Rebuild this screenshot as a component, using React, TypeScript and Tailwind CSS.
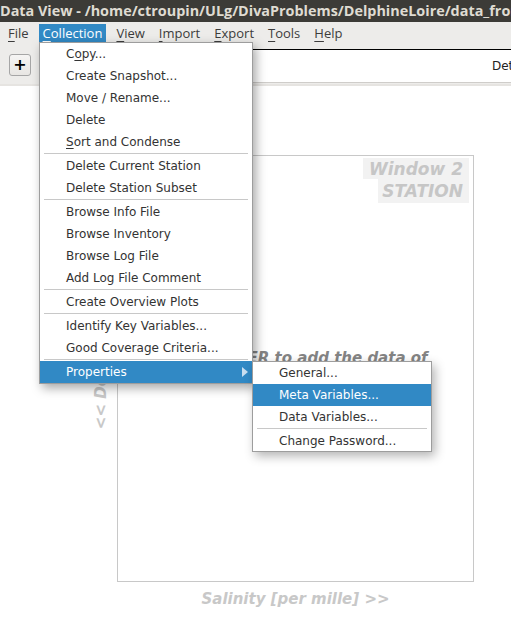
import React from 'react'

const collectionItems: (string | null)[] = [
  'Copy...',
  'Create Snapshot...',
  'Move / Rename...',
  'Delete',
  'Sort and Condense',
  null,
  'Delete Current Station',
  'Delete Station Subset',
  null,
  'Browse Info File',
  'Browse Inventory',
  'Browse Log File',
  'Add Log File Comment',
  null,
  'Create Overview Plots',
  null,
  'Identify Key Variables...',
  'Good Coverage Criteria...',
  null,
]

function Label({ text }: { text: string }) {
  // mnemonic underlines seen in the screenshot
  if (text === 'Copy...')
    return (
      <span>
        C<span className="underline underline-offset-2">o</span>py...
      </span>
    )
  if (text === 'Sort and Condense')
    return (
      <span>
        <span className="underline underline-offset-2">S</span>ort and Condense
      </span>
    )
  return <span>{text}</span>
}

function MenuBarItem({ first, rest, active }: { first: string; rest: string; active?: boolean }) {
  return (
    <div
      className={
        'h-[19px] px-[4px] flex items-center ' +
        (active ? 'bg-[#3189c5] text-white' : 'text-[#3c3c3c]')
      }
    >
      <span className="underline underline-offset-[3px] decoration-1">{first}</span>
      {rest}
    </div>
  )
}

export default function App() {
  return (
    <div className="relative w-[511px] h-[629px] overflow-hidden bg-white">
      {/* title bar */}
      <div className="h-[22px] bg-[#3c3b37] text-[#dfdbd2] font-['Open_Sans',sans-serif] font-bold text-[14.4px] leading-[22px] whitespace-nowrap overflow-hidden">
        Data View - /home/ctroupin/ULg/DivaProblems/DelphineLoire/data_from_somewhere
      </div>

      {/* menu bar */}
      <div className="h-[21px] bg-[#edecea] flex items-end gap-[6px] pl-[4px] font-['Open_Sans',sans-serif] text-[13px]">
        <MenuBarItem first="F" rest="ile" />
        <MenuBarItem first="C" rest="ollection" active />
        <MenuBarItem first="V" rest="iew" />
        <MenuBarItem first="I" rest="mport" />
        <MenuBarItem first="E" rest="xport" />
        <MenuBarItem first="T" rest="ools" />
        <MenuBarItem first="H" rest="elp" />
      </div>

      {/* toolbar */}
      <div className="h-[41px] bg-[#edecea] flex items-start">
        <button className="ml-[9px] mt-[11px] w-[22px] h-[22px] rounded-[3px] border border-[#a6a6a6] bg-gradient-to-b from-[#f6f5f4] to-[#e8e6e3] flex items-center justify-center text-[16px] font-bold leading-none text-black font-['DejaVu_Sans',sans-serif]">
          +
        </button>
        <div className="ml-[8px] mt-[6px] h-[34px] flex-1 bg-white border-t border-black border-b border-b-[#cfcdca] flex items-center overflow-hidden whitespace-nowrap font-['DejaVu_Sans',sans-serif] text-[12px] text-[#222]">
          <span className="pl-[453px]">Details</span>
        </div>
      </div>
      <div className="h-[2px] bg-[#e6e4e1]" />

      {/* main canvas */}
      <div className="relative pt-[69px]">
        <div className="relative ml-[117px] w-[357px] h-[427px] border border-[#c8c8c8]">
          <div className="absolute top-[2px] right-[4px] flex flex-col items-end font-['DejaVu_Sans',sans-serif] font-bold italic text-[17px] text-[#c6c6c6]">
            <div className="h-[21px] overflow-hidden bg-[#f2f2f2] pl-[6px] pr-[6px] pt-[1px] leading-[21px]">Window 2</div>
            <div className="h-[24px] bg-[#f2f2f2] pl-[4px] pr-[6px] leading-[24px]">STATION</div>
          </div>
          <div className="absolute top-[191px] left-0 right-0 text-center font-['DejaVu_Sans',sans-serif] font-bold italic text-[15px] text-[#848484] whitespace-nowrap">
            Press ENTER to add the data of
          </div>
        </div>
        <div className="w-[357px] ml-[117px] mt-[6px] text-center font-['DejaVu_Sans',sans-serif] font-bold italic text-[15px] text-[#c8c8c8]">
          Salinity [per mille] &gt;&gt;
        </div>
        <div className="absolute left-[90px] top-[72px] h-[427px] flex items-center">
          <div className="[writing-mode:vertical-rl] rotate-180 font-['DejaVu_Sans',sans-serif] font-bold italic text-[15px] text-[#c8c8c8] whitespace-nowrap">
            &lt;&lt; Depth [m]
          </div>
        </div>
      </div>

      {/* Collection dropdown */}
      <div className="absolute left-[39px] top-[42px] w-[214px] bg-white border border-[#9d9d9d] shadow-[3px_4px_10px_rgba(0,0,0,0.35)] font-['DejaVu_Sans',sans-serif] text-[12px] text-[#333]">
        {collectionItems.map((it, i) =>
          it === null ? (
            <div key={i} className="h-[2px] mx-[4px] border-t border-[#c8c8c8]" />
          ) : (
            <div key={i} className="h-[22px] flex items-center pl-[26px]">
              <Label text={it} />
            </div>
          ),
        )}
        <div className="h-[22px] flex items-center pl-[26px] pr-[4px] bg-[#3189c5] text-white">
          <span className="flex-1">Properties</span>
          <svg width="6" height="10" viewBox="0 0 6 10">
            <path d="M0 0 L6 5 L0 10 Z" fill="#c9def0" />
          </svg>
        </div>
      </div>

      {/* Properties submenu */}
      <div className="absolute left-[252px] top-[361px] w-[180px] bg-white border border-[#9d9d9d] shadow-[3px_4px_10px_rgba(0,0,0,0.3)] font-['DejaVu_Sans',sans-serif] text-[12px] text-[#333]">
        <div className="h-[22px] flex items-center pl-[26px]">General...</div>
        <div className="h-[22px] flex items-center pl-[26px] bg-[#3189c5] text-white">Meta Variables...</div>
        <div className="h-[22px] flex items-center pl-[26px]">Data Variables...</div>
        <div className="h-[2px] mx-[4px] border-t border-[#c8c8c8]" />
        <div className="h-[21px] flex items-center pl-[26px]">Change Password...</div>
      </div>
    </div>
  )
}
